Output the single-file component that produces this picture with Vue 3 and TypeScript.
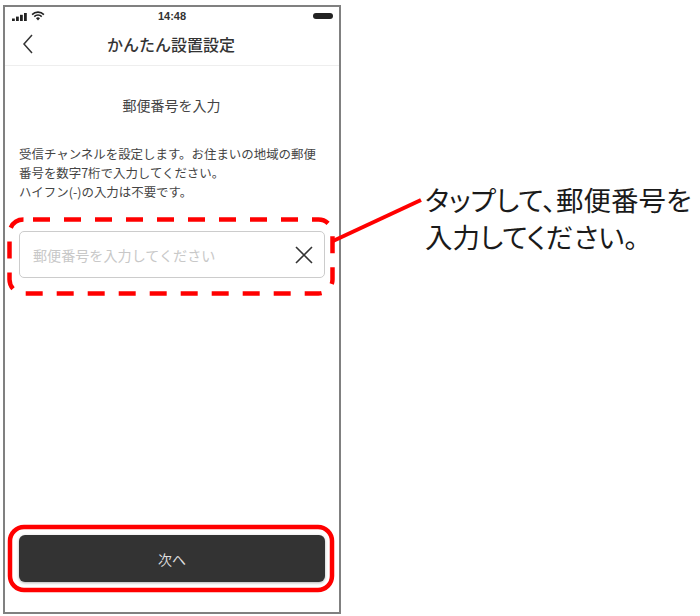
<script setup lang="ts">
const intro: string[] = [
  '受信チャンネルを設定します。お住まいの地域の郵便',
  '番号を数字7桁で入力してください。',
  'ハイフン(-)の入力は不要です。',
]
</script>

<template>
  <div class="page">
    <div class="phone">
      <div class="status">
        <div class="status-left">
          <svg width="15" height="8" viewBox="0 0 15 8"><rect x="0" y="5.5" width="2.8" height="2.5" fill="#222"/><rect x="4" y="3.6" width="2.8" height="4.4" fill="#222"/><rect x="8" y="1.8" width="2.8" height="6.2" fill="#222"/><rect x="12" y="0" width="2.8" height="8" fill="#222"/></svg>
          <svg width="14" height="10" viewBox="0 0 15 11"><path d="M1 4 A9 9 0 0 1 14 4 M3.4 6.2 A5.6 5.6 0 0 1 11.6 6.2" fill="none" stroke="#222" stroke-width="1.7"/><path d="M5.3 8 A3 3 0 0 1 9.7 8 L7.5 10.5 Z" fill="#222"/></svg>
        </div>
        <span class="time">14:48</span>
        <div class="battery"></div>
      </div>
      <div class="nav">
        <svg class="back" width="12" height="20" viewBox="0 0 12 20"><path d="M10 1 L2 10 L10 19" fill="none" stroke="#333" stroke-width="1.5"/></svg>
        <span class="nav-title">かんたん設置設定</span>
      </div>
      <div class="body">
        <h1 class="heading">郵便番号を入力</h1>
        <p class="intro"><span v-for="line in intro" :key="line" class="intro-line">{{ line }}</span></p>
        <div class="field">
          <span class="placeholder">郵便番号を入力してください</span>
          <svg width="18" height="18" viewBox="0 0 18 18"><path d="M1 1 L17 17 M17 1 L1 17" fill="none" stroke="#333" stroke-width="1.6"/></svg>
        </div>
        <div class="spacer"></div>
        <button class="next">次へ</button>
      </div>
    </div>
    <svg class="marks" width="700" height="616" viewBox="0 0 700 616">
      <rect x="9.5" y="219.5" width="323" height="74" rx="14" fill="none" stroke="#f00" stroke-width="4.5" stroke-dasharray="17 14" stroke-dashoffset="-9.5"/>
      <path d="M333 241 L421 200" fill="none" stroke="#f00" stroke-width="4"/>
      <rect x="10" y="527" width="322" height="63" rx="14" fill="none" stroke="#f00" stroke-width="4.5"/>
    </svg>
    <div class="note">タップして、郵便番号を<br />入力してください。</div>
  </div>
</template>

<style>
html, body { margin: 0; background: #fff; }
</style>

<style scoped>
.page {
  position: relative;
  width: 700px;
  height: 616px;
  overflow: hidden;
  background: #fff;
  padding: 5px 0 0 3px;
  box-sizing: border-box;
  font-family: "Noto Sans CJK JP", "Noto Sans", sans-serif;
}
.phone {
  width: 338px;
  height: 609px;
  box-sizing: border-box;
  border: 2px solid #808080;
  display: flex;
  flex-direction: column;
  background: #fff;
}
.status {
  height: 20px;
  box-sizing: border-box;
  padding: 0 6px 3px 7px;
  display: flex;
  align-items: center;
  justify-content: space-between;
  position: relative;
}
.status-left { display: flex; align-items: flex-end; gap: 4px; }
.time {
  position: absolute;
  left: 0;
  right: 0;
  top: 2px;
  text-align: center;
  font-family: "Liberation Sans", sans-serif;
  font-size: 11px;
  line-height: 14px;
  font-weight: 700;
  color: #333;
}
.battery { width: 20px; height: 6px; border-radius: 3px; background: #222; margin-top: 1px; }
.nav {
  height: 38px;
  position: relative;
  display: flex;
  align-items: center;
  justify-content: center;
  border-bottom: 1px solid #eee;
}
.back { position: absolute; left: 17px; top: 7px; }
.nav-title { font-size: 16px; font-weight: 500; color: #333; position: relative; left: -1px; top: -2px; }
.body {
  flex: 1;
  display: flex;
  flex-direction: column;
  padding: 0 14px 30px;
}
.heading {
  margin: 29px 1px 0 0;
  text-align: center;
  font-size: 14px;
  line-height: 20px;
  font-weight: 400;
  color: #444;
}
.intro {
  margin: 30px 0 0;
  font-size: 12.45px;
  line-height: 19px;
  color: #444;
}
.intro-line { display: block; white-space: nowrap; }
.field {
  margin-top: 29px;
  height: 47px;
  box-sizing: border-box;
  border: 1px solid #ccc;
  border-radius: 5px;
  display: flex;
  align-items: center;
  justify-content: space-between;
  padding: 0 11px 0 13px;
}
.placeholder { font-size: 14.1px; color: #c8c8c8; }
.spacer { flex: 1; }
.next {
  height: 47px;
  border: 0;
  border-radius: 6px;
  background: #333;
  color: #ddd;
  font: inherit;
  font-size: 14px;
  box-shadow: 0 1px 3px rgba(0, 0, 0, 0.3);
}
.marks { position: absolute; left: 0; top: 0; pointer-events: none; }
.note {
  position: absolute;
  left: 425px;
  top: 181px;
  font-size: 27.5px;
  font-feature-settings: "palt";
  line-height: 37px;
  color: #1a1a1a;
  white-space: nowrap;
}
</style>
